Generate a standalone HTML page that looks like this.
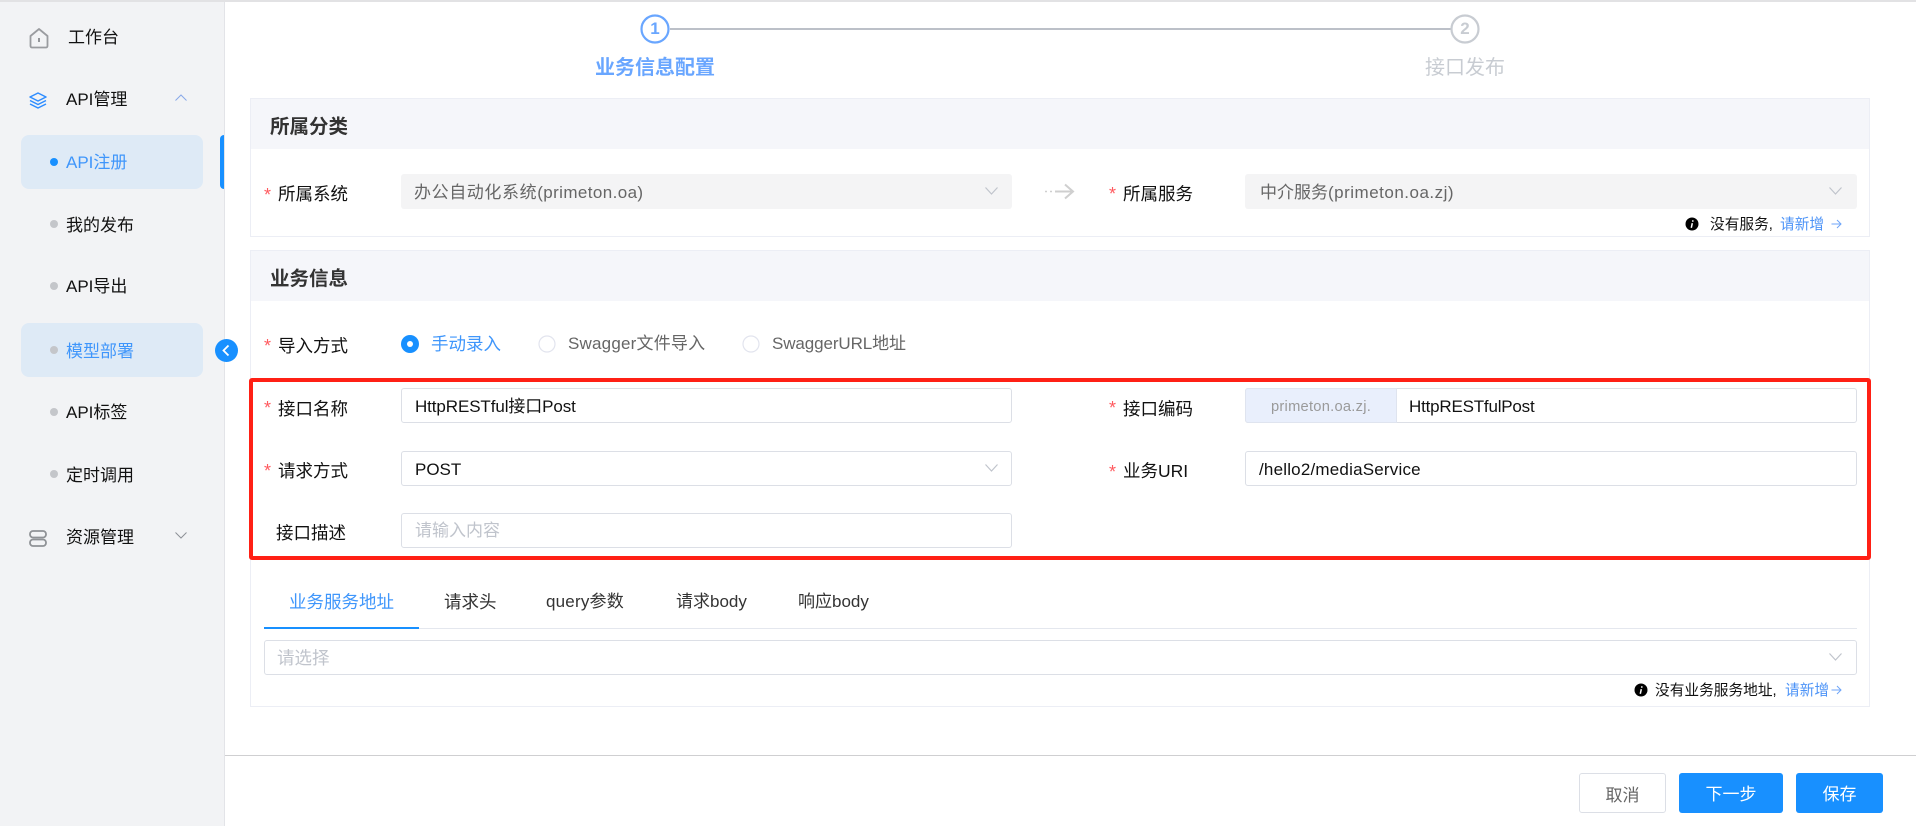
<!DOCTYPE html>
<html lang="zh">
<head>
<meta charset="utf-8">
<title>API注册</title>
<style>
html,body{margin:0;padding:0;width:1916px;height:826px;overflow:hidden;background:#fff}
body{position:relative;font-family:"Liberation Sans","Noto Sans CJK SC",sans-serif;color:#111}
.a{position:absolute;box-sizing:border-box}
.t{position:absolute;white-space:nowrap;line-height:24px;height:24px;font-size:17px}
.star{position:absolute;color:#ff5a5f;font-size:18px;line-height:24px;height:24px}
.inp{position:absolute;box-sizing:border-box;height:35px;border:1px solid #dcdfe6;border-radius:3px;background:#fff}
.dis{background:#f4f4f5;border:0}
.hd{position:absolute;left:251px;width:1618px;height:50px;background:#f5f6fa}
.box{position:absolute;box-sizing:border-box;left:250px;width:1620px;border:1px solid #eceef5}
.dot{position:absolute;left:50px;width:8px;height:8px;border-radius:50%;background:#c4c6ca}
.ttl{font-weight:700;font-size:19.5px;color:#333}
.hint{font-size:14.7px}
.ph{color:#c0c4cc}
.dtx{color:#666}
.btn{font-size:17px;line-height:44px;text-align:center}
svg{position:absolute;overflow:visible}
</style>
</head>
<body>
<div class="a" style="left:0;top:0;width:1916px;height:2px;background:#e2e2e4"></div>

<!-- sidebar -->
<div class="a" style="left:0;top:2px;width:225px;height:824px;background:#f2f3f5;border-right:1px solid #e3e4e8"></div>

<svg style="left:29px;top:27px" width="20" height="22" viewBox="0 0 20 22" fill="none"><path d="M1.5 9 10 2l8.500 7v10a1.500 1.500 0 0 1-1.500 1.500H3A1.500 1.500 0 0 1 1.500 19z" stroke="#9a9ca0" stroke-width="1.800" stroke-linejoin="round"/><path d="M10 11v4" stroke="#8a8c90" stroke-width="1.800"/></svg>
<div class="t" style="left:68px;top:26px">工作台</div>

<svg style="left:29px;top:92px" width="18" height="17" viewBox="0 0 18 17" fill="none" stroke="#2f8dff" stroke-width="1.500" stroke-linejoin="round"><path d="M9 1 17 5 9 9 1 5z"/><path d="M1 8.500 9 12.500 17 8.500"/><path d="M1 12 9 16 17 12"/></svg>
<div class="t" style="left:66px;top:88px">API管理</div>
<svg style="left:175px;top:94px" width="12" height="7" viewBox="0 0 12 7" fill="none"><path d="M.5 6.500 6 1l5.500 5.500" stroke="#88a8e8" stroke-width="1"/></svg>

<div class="a" style="left:21px;top:135px;width:182px;height:54px;background:#deeaf6;border-radius:8px"></div>
<div class="a" style="left:220px;top:135px;width:4px;height:54px;background:#1890ff;border-radius:4px 0 0 4px"></div>
<div class="dot" style="top:158px;background:#1890ff"></div>
<div class="t" style="left:66px;top:151px;color:#3f96fb">API注册</div>

<div class="dot" style="top:220px"></div>
<div class="t" style="left:66px;top:214px">我的发布</div>

<div class="dot" style="top:282px"></div>
<div class="t" style="left:66px;top:275px">API导出</div>

<div class="a" style="left:21px;top:323px;width:182px;height:54px;background:#deeaf6;border-radius:8px"></div>
<div class="dot" style="top:346px"></div>
<div class="t" style="left:66px;top:339.500px;color:#3f96fb">模型部署</div>

<div class="dot" style="top:408px"></div>
<div class="t" style="left:66px;top:401px">API标签</div>

<div class="dot" style="top:470px"></div>
<div class="t" style="left:66px;top:464px">定时调用</div>

<svg style="left:29px;top:530px" width="18" height="17" viewBox="0 0 18 17" fill="none" stroke="#8f9296" stroke-width="1.800"><rect x="1" y="1" width="16" height="6.500" rx="3"/><rect x="1" y="9.500" width="16" height="6.500" rx="3"/></svg>
<div class="t" style="left:66px;top:526px">资源管理</div>
<svg style="left:175px;top:532px" width="12" height="7" viewBox="0 0 12 7" fill="none"><path d="M.5.500 6 6l5.500-5.500" stroke="#8c9096" stroke-width="1"/></svg>

<svg style="left:215px;top:339px" width="23" height="23" viewBox="0 0 23 23"><circle cx="11.500" cy="11.500" r="11.500" fill="#1890ff"/><path d="M13.500 6.500 8.500 11.500l5 5" fill="none" stroke="#fff" stroke-width="1.800"/></svg>

<!-- steps -->
<svg style="left:640px;top:14px" width="840" height="30" viewBox="0 0 840 30" fill="none">
<path d="M30 15H812" stroke="#bcc0c8" stroke-width="2"/>
<circle cx="15" cy="15" r="13.500" stroke="#69a6ff" stroke-width="2.200" fill="#fff"/>
<circle cx="825" cy="15" r="13.500" stroke="#c8ccd2" stroke-width="2.200" fill="#fff"/>
</svg>
<div class="t" style="left:640px;top:17px;width:30px;text-align:center;font-size:17px;font-weight:700;color:#69a6ff">1</div>
<div class="t" style="left:1450px;top:17px;width:30px;text-align:center;font-size:17px;font-weight:700;color:#c8ccd2">2</div>
<div class="t" style="left:595px;top:56px;font-size:20px;font-weight:700;color:#69a6ff">业务信息配置</div>
<div class="t" style="left:1425px;top:56px;font-size:20px;color:#c8ccd2">接口发布</div>

<!-- panel 1 -->
<div class="box" style="top:98px;height:139px"></div>
<div class="hd" style="top:99px"></div>
<div class="t ttl" style="left:270px;top:115px">所属分类</div>

<div class="star" style="left:264px;top:183px">*</div>
<div class="t" style="left:278px;top:182px;font-size:17.500px">所属系统</div>
<div class="inp dis" style="left:401px;top:174px;width:611px"></div>
<div class="t dtx" style="left:414px;top:181px;letter-spacing:.6px">办公自动化系统<span style="letter-spacing:.4px">(primeton.oa)</span></div>
<svg style="left:985px;top:187px" width="13" height="8" viewBox="0 0 13 8" fill="none"><path d="M.5.500 6.500 7l6-6.500" stroke="#c0c4cc" stroke-width="1.200"/></svg>

<svg style="left:1044px;top:183px" width="31" height="17" viewBox="0 0 31 17" fill="none" stroke="#cfcfcf"><path d="M1 8.500h2M6 8.500h2" stroke-width="1.500"/><path d="M11 8.500h18M21 1.500l8 7-8 7" stroke-width="2"/></svg>

<div class="star" style="left:1109px;top:182px">*</div>
<div class="t" style="left:1123px;top:182px;font-size:17.500px">所属服务</div>
<div class="inp dis" style="left:1245px;top:174px;width:612px"></div>
<div class="t dtx" style="left:1260px;top:181px">中介服务<span style="letter-spacing:.5px">(primeton.oa.zj)</span></div>
<svg style="left:1829px;top:187px" width="13" height="8" viewBox="0 0 13 8" fill="none"><path d="M.5.500 6.500 7l6-6.500" stroke="#c0c4cc" stroke-width="1.200"/></svg>

<svg style="left:1685px;top:217px" width="14" height="14" viewBox="0 0 14 14"><circle cx="7" cy="7" r="6.500" fill="#000"/><path d="M7.800 3.200v1.600M7.300 6.200 6.300 10.800" stroke="#fff" stroke-width="1.500"/></svg>
<div class="t hint" style="left:1710px;top:213px">没有服务,</div>
<div class="t hint" style="left:1780px;top:213px;color:#4c93f7">请新增</div>
<svg style="left:1831px;top:219px" width="11" height="10" viewBox="0 0 11 10" fill="none"><path d="M.5 5h9.500M6 1l4 4-4 4" stroke="#6fa5f8" stroke-width="1"/></svg>

<!-- panel 2 -->
<div class="box" style="top:250px;height:457px"></div>
<div class="hd" style="top:251px"></div>
<div class="t ttl" style="left:270px;top:266.500px">业务信息</div>

<div class="star" style="left:264px;top:334px">*</div>
<div class="t" style="left:278px;top:334px;font-size:17.500px">导入方式</div>
<svg style="left:401px;top:335px" width="18" height="18" viewBox="0 0 18 18"><circle cx="9" cy="9" r="9" fill="#1890ff"/><circle cx="9" cy="9" r="3" fill="#fff"/></svg>
<div class="t" style="left:431px;top:332px;color:#3f96fb;font-size:17.500px">手动录入</div>
<svg style="left:538px;top:335px" width="18" height="18" viewBox="0 0 18 18"><circle cx="9" cy="9" r="8" fill="#fff" stroke="#e2e4ee" stroke-width="1.200"/></svg>
<div class="t dtx" style="left:568px;top:332px;letter-spacing:.2px">Swagger文件导入</div>
<svg style="left:742px;top:335px" width="18" height="18" viewBox="0 0 18 18"><circle cx="9" cy="9" r="8" fill="#fff" stroke="#e2e4ee" stroke-width="1.200"/></svg>
<div class="t dtx" style="left:772px;top:332px;letter-spacing:-.1px">SwaggerURL地址</div>

<!-- left col -->
<div class="star" style="left:264px;top:396px">*</div>
<div class="t" style="left:278px;top:397px;font-size:17.500px">接口名称</div>
<div class="inp" style="left:401px;top:388px;width:611px"></div>
<div class="t" style="left:415px;top:395px;letter-spacing:-.1px">HttpRESTful接口Post</div>

<div class="star" style="left:264px;top:459px">*</div>
<div class="t" style="left:278px;top:459px;font-size:17.500px">请求方式</div>
<div class="inp" style="left:401px;top:451px;width:611px"></div>
<div class="t" style="left:415px;top:458px">POST</div>
<svg style="left:985px;top:464px" width="13" height="8" viewBox="0 0 13 8" fill="none"><path d="M.5.500 6.500 7l6-6.500" stroke="#c0c4cc" stroke-width="1.200"/></svg>

<div class="t" style="left:276px;top:521px;font-size:17.500px">接口描述</div>
<div class="inp" style="left:401px;top:513px;width:611px"></div>
<div class="t ph" style="left:415px;top:519px">请输入内容</div>

<!-- right col -->
<div class="star" style="left:1109px;top:396px">*</div>
<div class="t" style="left:1123px;top:397px;font-size:17.500px">接口编码</div>
<div class="inp" style="left:1245px;top:388px;width:612px"></div>
<div class="a" style="left:1245px;top:388px;width:152px;height:35px;background:#e9effc;border:1px solid #dfe4ef;border-radius:3px 0 0 3px"></div>
<div class="t hint" style="left:1271px;top:395px;color:#9a9a9a;letter-spacing:.25px">primeton.oa.zj.</div>
<div class="t" style="left:1409px;top:395px;letter-spacing:-.2px">HttpRESTfulPost</div>

<div class="star" style="left:1109px;top:460px">*</div>
<div class="t" style="left:1123px;top:459px;font-size:17.500px">业务URI</div>
<div class="inp" style="left:1245px;top:451px;width:612px"></div>
<div class="t" style="left:1259px;top:458px;letter-spacing:.2px">/hello2/mediaService</div>

<!-- red highlight -->
<div class="a" style="left:249px;top:378px;width:1622px;height:182px;border:4px solid #ff2015;border-radius:3px"></div>

<!-- tabs -->
<div class="a" style="left:264px;top:628px;width:1593px;height:1px;background:#e4e7ee"></div>
<div class="a" style="left:264px;top:627px;width:155px;height:2px;background:#1890ff"></div>
<div class="t" style="left:289px;top:590px;color:#3f96fb;font-size:17.500px">业务服务地址</div>
<div class="t" style="left:444px;top:590px;color:#333;font-size:17.500px">请求头</div>
<div class="t" style="left:546px;top:590px;color:#333;letter-spacing:.2px">query参数</div>
<div class="t" style="left:676px;top:590px;color:#333">请求body</div>
<div class="t" style="left:798px;top:590px;color:#333">响应body</div>

<div class="inp" style="left:264px;top:640px;width:1593px"></div>
<div class="t ph" style="left:277px;top:646px;font-size:17.500px">请选择</div>
<svg style="left:1829px;top:653px" width="13" height="8" viewBox="0 0 13 8" fill="none"><path d="M.5.500 6.500 7l6-6.500" stroke="#c0c4cc" stroke-width="1.200"/></svg>

<svg style="left:1634px;top:683px" width="14" height="14" viewBox="0 0 14 14"><circle cx="7" cy="7" r="6.500" fill="#000"/><path d="M7.800 3.200v1.600M7.300 6.200 6.300 10.800" stroke="#fff" stroke-width="1.500"/></svg>
<div class="t hint" style="left:1655px;top:679px">没有业务服务地址,</div>
<div class="t hint" style="left:1785px;top:679px;color:#4c93f7">请新增</div>
<svg style="left:1831px;top:685px" width="11" height="10" viewBox="0 0 11 10" fill="none"><path d="M.5 5h9.500M6 1l4 4-4 4" stroke="#6fa5f8" stroke-width="1"/></svg>

<!-- footer -->
<div class="a" style="left:225px;top:755px;width:1691px;height:1px;background:#cfcfd1"></div>
<div class="a btn" style="left:1579px;top:773px;width:87px;height:40px;border:1px solid #dcdfe6;border-radius:3px;background:#fff;color:#666">取消</div>
<div class="a btn" style="left:1679px;top:773px;width:104px;height:40px;border-radius:3px;background:#1890ff;color:#fff">下一步</div>
<div class="a btn" style="left:1796px;top:773px;width:87px;height:40px;border-radius:3px;background:#1890ff;color:#fff">保存</div>
</body>
</html>
